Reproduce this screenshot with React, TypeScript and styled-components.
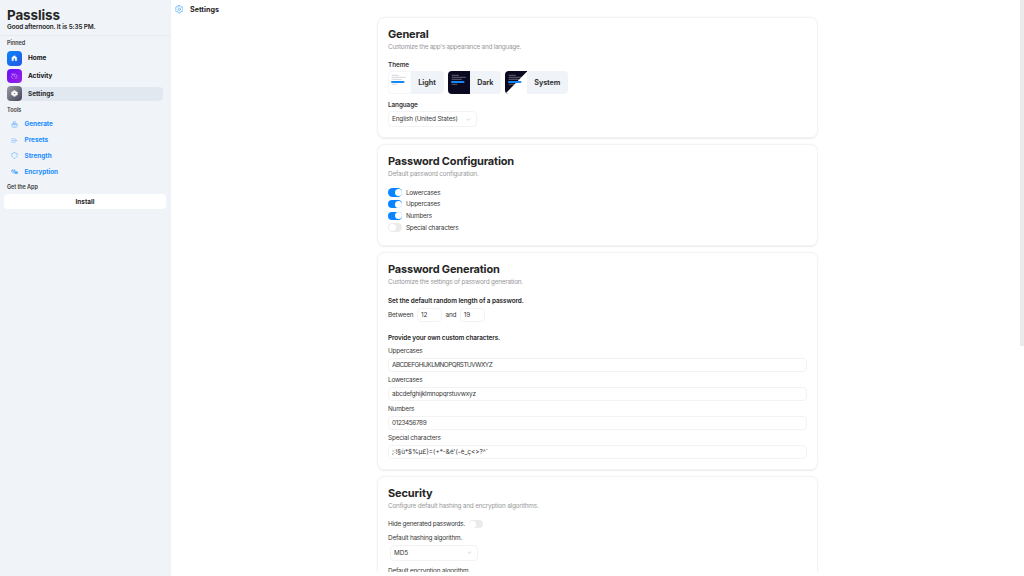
import React from "react";
import styled, { createGlobalStyle } from "styled-components";

const Global = createGlobalStyle`
  * { box-sizing: border-box; }
  html, body { margin: 0; height: 576px; overflow: hidden; background: #fff; }
  body { font-family: Inter, "Liberation Sans", sans-serif; color: #262626; font-size: 6.4px; }
`;

const Text = styled.span<{ $size?: number; $weight?: number; $color?: string; $track?: number; $line?: number }>`
  display: block;
  white-space: pre;
  font-size: ${(p) => p.$size ?? 6.4}px;
  font-weight: ${(p) => p.$weight ?? 400};
  color: ${(p) => p.$color ?? "#383838"};
  letter-spacing: ${(p) => p.$track ?? 0}px;
  line-height: ${(p) => p.$line ?? 10}px;
`;

const Shell = styled.div`
  display: flex;
  width: 1024px;
  height: 576px;
  overflow: hidden;
`;

const Sidebar = styled.aside`
  width: 171px;
  flex: none;
  background: #f0f4f9;
  border-right: 1px solid #edf0f4;
  display: flex;
  flex-direction: column;
`;

const Brand = styled.header`
  height: 36px;
  padding: 7px 7px 0;
  border-bottom: 1px solid #e9edf2;
`;

const SectionLabel = styled.div<{ $height: number; $top: number }>`
  height: ${(p) => p.$height}px;
  padding: ${(p) => p.$top}px 7px 0;
`;

const PinnedList = styled.nav`
  display: flex;
  flex-direction: column;
  gap: 3.4px;
  padding: 0 7px;
`;

const PinnedItem = styled.a<{ $active?: boolean }>`
  display: flex;
  align-items: center;
  gap: 6.5px;
  height: 14.2px;
  border-radius: 4px;
  background: ${(p) => (p.$active ? "#e1e8f0" : "transparent")};
`;

const Badge = styled.span<{ $bg: string }>`
  width: 14.5px;
  height: 14.5px;
  border-radius: 4px;
  display: grid;
  place-items: center;
  background: ${(p) => p.$bg};
`;

const ToolList = styled.nav`
  display: flex;
  flex-direction: column;
  padding: 0 10.5px;
`;

const ToolItem = styled.a`
  display: flex;
  align-items: center;
  gap: 7px;
  height: 15.85px;
`;

const InstallButton = styled.button`
  margin: 0 4px;
  height: 15px;
  padding: 0;
  border: 0;
  border-radius: 4px;
  background: #fff;
  font-family: inherit;
`;

const Main = styled.main`
  flex: 1;
  height: 572px;
  overflow: hidden;
`;

const TopBar = styled.header`
  height: 17px;
  display: flex;
  align-items: center;
  gap: 7px;
  padding: 2px 0 0 3.5px;
`;

const Column = styled.div`
  width: 441px;
  margin: 0 0 0 206px;
  display: flex;
  flex-direction: column;
  gap: 6px;
`;

const Card = styled.section<{ $height: number }>`
  flex: none;
  height: ${(p) => p.$height}px;
  padding: 8.5px 10px 0 10px;
  border: 1px solid #f3f3f4;
  border-radius: 7.5px;
  box-shadow: 0 0.5px 1.5px rgba(0, 0, 0, 0.08);
`;

const Spacer = styled.div<{ $height: number }>`
  height: ${(p) => p.$height}px;
`;

const Row = styled.div<{ $gap?: number }>`
  display: flex;
  align-items: center;
  gap: ${(p) => p.$gap ?? 4}px;
`;

const ThemeOption = styled.button<{ $width: number }>`
  width: ${(p) => p.$width}px;
  height: 23px;
  padding: 0;
  border: 0;
  border-radius: 4px;
  background: #f0f4f9;
  display: flex;
  overflow: hidden;
  font-family: inherit;
  align-items: center;
`;

const OptionLabel = styled.span`
  flex: 1;
  display: flex;
  justify-content: center;
`;

const Select = styled.div<{ $width: number; $indent?: number }>`
  width: ${(p) => p.$width}px;
  height: 16px;
  margin-left: ${(p) => p.$indent ?? 0}px;
  padding: 0 5px 0 3px;
  border: 1px solid #f3f3f4;
  border-radius: 4px;
  display: flex;
  align-items: center;
  justify-content: space-between;
`;

const Toggle = styled.span<{ $on?: boolean }>`
  width: 14.4px;
  height: 8.4px;
  padding: 0.7px;
  border-radius: 5px;
  display: flex;
  justify-content: ${(p) => (p.$on ? "flex-end" : "flex-start")};
  background: ${(p) => (p.$on ? "#0a84ff" : "#ebebec")};
`;

const Knob = styled.span`
  width: 7px;
  height: 7px;
  border-radius: 50%;
  background: #fff;
`;

const ToggleRow = styled.div`
  height: 11.65px;
  display: flex;
  align-items: center;
  gap: 3.5px;
`;

const Field = styled.div<{ $width?: number }>`
  width: ${(p) => (p.$width ? `${p.$width}px` : "100%")};
  height: 14px;
  padding: 0 3px;
  border: 1px solid #f3f3f4;
  border-radius: 4px;
  display: flex;
  align-items: center;
`;

const FieldGroup = styled.div`
  height: 28.9px;
  display: flex;
  flex-direction: column;
  gap: 2px;
`;

const ScrollBar = styled.div`
  width: 4px;
  height: 346px;
  flex: none;
  background: #ebebec;
`;

const Icon = ({ children, size = 7, color = "#fff", sw = 1.8, fill = "none" }: { children: React.ReactNode; size?: number; color?: string; sw?: number; fill?: string }) => (
  <svg width={size} height={size} viewBox="0 0 24 24" fill={fill} stroke={color} strokeWidth={sw} strokeLinecap="round" strokeLinejoin="round" style={{ display: "block" }}>
    {children}
  </svg>
);

const GEAR = "M9.5 2.5h5l.8 3 2.2 1.3 3-.8 2.3 4-2.2 2.1 2.2 2-2.3 4.1-3-.8-2.2 1.3-.8 3h-5l-.8-3-2.2-1.3-3 .8-2.3-4.1 2.2-2-2.2-2.1 2.3-4 3 .8 2.2-1.3z";
const HEX_GEAR = "M9.5 1.5h5l1 3.2 2 1.1 3.3-.7 2 4.2-2.3 2.7 2.3 2.7-2 4.2-3.3-.7-2 1.1-1 3.2h-5l-1-3.2-2-1.1-3.3.7-2-4.2L3.5 12 1.2 9.3l2-4.2 3.3.7 2-1.1z";

const HomeIcon = () => (
  <Icon size={6.6} fill="#fff" sw={1}><path d="M12 2 3 9.5V21h6v-6a3 3 0 0 1 6 0v6h6V9.5z" /></Icon>
);
const ActivityIcon = () => (
  <Icon size={6.6} color="#dcb4ff" sw={2}><path d="M4 7a10 10 0 1 1-2 5M4 2v5h5M12 7v5l4 2" /></Icon>
);
const SettingsSolidIcon = () => (
  <Icon size={7} fill="#fff" sw={1.8}><path d={GEAR} /><circle cx="12" cy="12" r="2.6" fill="#85868d" stroke="none" /></Icon>
);
const SettingsIcon = () => (
  <Icon size={8.5} color="#4facfb" sw={2}><path d={HEX_GEAR} /><circle cx="12" cy="12" r="3.5" /></Icon>
);
const GenerateIcon = () => (
  <Icon color="#62b2fc" sw={2}><rect x="3" y="8" width="18" height="14" rx="5" /><path d="M8 8V5a4 4 0 0 1 8 0v3M4 12h16M10 17h4" /></Icon>
);
const PresetsIcon = () => (
  <Icon color="#7dbffc" sw={2.2}><path d="M2 6h12M2 12h16M2 18h12M16 8l4 4-4 4" /></Icon>
);
const StrengthIcon = () => (
  <Icon color="#62b2fc" sw={2}><path d="M12 2c3 2 5 3 9 3v7c0 5-4 8-9 10-5-2-9-5-9-10V5c4 0 6-1 9-3z" /></Icon>
);
const EncryptionIcon = () => (
  <Icon color="#4ba8fb" sw={2.2}><path d="M2 12 5 5l3 7M3 10h4M11 5v6h3V8h-3M5 16h5" /><rect x="14" y="13" width="8" height="6" fill="#4ba8fb" /></Icon>
);
const Chevron = () => (
  <Icon size={5} color="#b5b5b8" sw={2.6}><path d="m5 9 7 7 7-7" /></Icon>
);

const Preview = ({ mode }: { mode: "light" | "dark" | "system" }) => {
  const bar = mode === "light" ? "#dedfe2" : "#504f62";
  return (
    <svg width="22.5" height="23" viewBox="0 0 22.5 23" style={{ flex: "none", display: "block" }}>
      <rect width="22.5" height="23" fill={mode === "light" ? "#fff" : "#0b0920"} />
      {mode === "light" && <rect x=".4" y=".4" width="26" height="22.2" rx="3.6" fill="none" stroke="#f0f3f7" strokeWidth=".8" />}
      <rect x="3.5" y="3.7" width="7.5" height="1.2" rx=".6" fill={bar} />
      <rect x="3.5" y="5.7" width="14.5" height="1.2" rx=".6" fill={bar} />
      <rect x="3.5" y="7.7" width="10.5" height="1.2" rx=".6" fill={bar} />
      <rect x="3.5" y="12.7" width="6" height="1.2" rx=".6" fill={bar} />
      {mode === "system" && <path d="M22.5 0v23H0z" fill="#fff" />}
      <rect x="3" y="9.9" width="13.5" height="2" rx="1" fill="#1687f7" />
    </svg>
  );
};

const Title = ({ children, track = -0.17 }: { children: string; track?: number }) => (
  <Text $size={11} $weight={700} $line={15} $color="#262626" $track={track}>{children}</Text>
);
const Sub = ({ children, track = -0.2 }: { children: string; track?: number }) => (
  <Text $color="#98989b" $line={10} $track={track}>{children}</Text>
);

const toggles = [
  { label: "Lowercases", on: true, track: -0.18 },
  { label: "Uppercases", on: true, track: -0.2 },
  { label: "Numbers", on: true, track: -0.22 },
  { label: "Special characters", on: false, track: -0.2 },
];

const charsets = [
  { label: "Uppercases", value: "ABCDEFGHIJKLMNOPQRSTUVWXYZ", track: -0.5 },
  { label: "Lowercases", value: "abcdefghijklmnopqrstuvwxyz", track: -0.2 },
  { label: "Numbers", value: "0123456789", track: -0.36 },
  { label: "Special characters", value: ";:!§ù*$%µ£}=(+*-&é'(-è_ç<>?^`", track: 0 },
];

export default function App() {
  return (
    <>
      <Global />
      <Shell>
        <Sidebar>
          <Brand>
            <Text $size={13.4} $weight={700} $line={16} $color="#262626" $track={-0.08}>Passliss</Text>
            <Text $weight={600} $line={8} $color="#262626" $track={-0.12}>Good afternoon. It is 5:35 PM.</Text>
          </Brand>
          <SectionLabel $height={15.4} $top={2}><Text $size={5.5} $weight={600} $track={-0.03}>Pinned</Text></SectionLabel>
          <PinnedList>
            <PinnedItem><Badge $bg="linear-gradient(135deg,#0a84ff,#2457e0)"><HomeIcon /></Badge><Text $weight={700} $color="#111">Home</Text></PinnedItem>
            <PinnedItem><Badge $bg="linear-gradient(135deg,#6a0cff,#9a22e0)"><ActivityIcon /></Badge><Text $weight={700} $color="#111">Activity</Text></PinnedItem>
            <PinnedItem $active><Badge $bg="linear-gradient(135deg,#9b9ca2,#45455c)"><SettingsSolidIcon /></Badge><Text $weight={700} $color="#262626">Settings</Text></PinnedItem>
          </PinnedList>
          <SectionLabel $height={15.6} $top={4}><Text $size={5.5} $weight={600}>Tools</Text></SectionLabel>
          <ToolList>
            <ToolItem><GenerateIcon /><Text $weight={700} $color="#198cff" $track={-0.05}>Generate</Text></ToolItem>
            <ToolItem><PresetsIcon /><Text $weight={700} $color="#198cff">Presets</Text></ToolItem>
            <ToolItem><StrengthIcon /><Text $weight={700} $color="#198cff">Strength</Text></ToolItem>
            <ToolItem><EncryptionIcon /><Text $weight={700} $color="#198cff" $track={-0.08}>Encryption</Text></ToolItem>
          </ToolList>
          <SectionLabel $height={14.3} $top={1.8}><Text $size={5.5} $weight={600} $track={-0.07}>Get the App</Text></SectionLabel>
          <InstallButton><Text $weight={700} $color="#262626">Install</Text></InstallButton>
        </Sidebar>
        <Main>
          <TopBar><SettingsIcon /><Text $weight={700} $size={7.2} $color="#262626">Settings</Text></TopBar>
          <Column>
            <Card $height={121}>
              <Title track={-0.2}>General</Title>
              <Sub track={-0.25}>Customize the app's appearance and language.</Sub>
              <Spacer $height={8} />
              <Text $weight={600} $track={-0.08}>Theme</Text>
              <Spacer $height={1.5} />
              <Row>
                <ThemeOption $width={55.5}><Preview mode="light" /><OptionLabel><Text $size={7.2} $weight={700}>Light</Text></OptionLabel></ThemeOption>
                <ThemeOption $width={53}><Preview mode="dark" /><OptionLabel><Text $size={7.2} $weight={700} $track={-0.1}>Dark</Text></OptionLabel></ThemeOption>
                <ThemeOption $width={63}><Preview mode="system" /><OptionLabel><Text $size={7.2} $weight={700} $track={-0.1}>System</Text></OptionLabel></ThemeOption>
              </Row>
              <Spacer $height={5.5} />
              <Text $weight={600} $track={-0.1}>Language</Text>
              <Spacer $height={1.5} />
              <Select $width={89}><Text $track={-0.13}>English (United States)</Text><Chevron /></Select>
            </Card>
            <Card $height={102}>
              <Title>Password Configuration</Title>
              <Sub track={-0.2}>Default password configuration.</Sub>
              <Spacer $height={8.3} />
              {toggles.map((t) => (
                <ToggleRow key={t.label}>
                  <Toggle $on={t.on}><Knob /></Toggle>
                  <Text $track={t.track}>{t.label}</Text>
                </ToggleRow>
              ))}
            </Card>
            <Card $height={218}>
              <Title>Password Generation</Title>
              <Sub>Customize the settings of password generation.</Sub>
              <Spacer $height={9} />
              <Text $weight={600} $color="#262626" $track={-0.07}>Set the default random length of a password.</Text>
              <Spacer $height={2.7} />
              <Row $gap={3.6}>
                <Text $track={-0.15}>Between</Text><Field $width={25}><Text $track={-0.1}>12</Text></Field>
                <Text $track={-0.25}>and</Text><Field $width={25}><Text $track={-0.1}>19</Text></Field>
              </Row>
              <Spacer $height={10.5} />
              <Text $weight={600} $color="#262626" $track={-0.09}>Provide your own custom characters.</Text>
              <Spacer $height={3.3} />
              {charsets.map((c) => (
                <FieldGroup key={c.label}>
                  <Text $track={-0.19}>{c.label}</Text>
                  <Field><Text $track={c.track}>{c.value}</Text></Field>
                </FieldGroup>
              ))}
            </Card>
            <Card $height={150}>
              <Title track={-0.12}>Security</Title>
              <Sub>Configure default hashing and encryption algorithms.</Sub>
              <Spacer $height={8.8} />
              <Row $gap={3.6}><Text $track={-0.24}>Hide generated passwords.</Text><Toggle><Knob /></Toggle></Row>
              <Spacer $height={4} />
              <Text $track={-0.2}>Default hashing algorithm.</Text>
              <Spacer $height={1.6} />
              <Select $width={88} $indent={2}><Text $track={-0.1}>MD5</Text><Chevron /></Select>
              <Spacer $height={5} />
              <Text $track={-0.2}>Default encryption algorithm.</Text>
            </Card>
          </Column>
        </Main>
        <ScrollBar />
      </Shell>
    </>
  );
}
